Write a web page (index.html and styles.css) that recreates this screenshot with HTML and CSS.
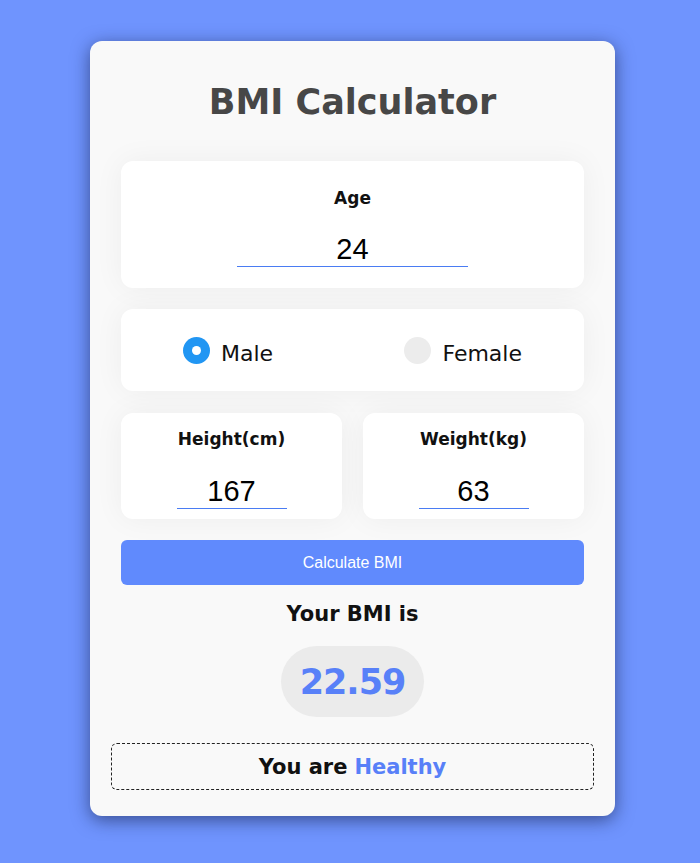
FILE: index.html
```html
<!DOCTYPE html>
<html>
<head>
<meta charset="utf-8">
<link rel="stylesheet" href="styles.css">
</head>
<body>
<div class="card">
  <h1 class="title">BMI Calculator</h1>
  <div class="box age-box">
    <label class="label">Age</label>
    <input class="num wide" type="text" value="24">
  </div>
  <div class="box gender-box">
    <div class="radio"><span class="dot on"></span><span class="rlabel">Male</span></div>
    <div class="radio"><span class="dot"></span><span class="rlabel">Female</span></div>
  </div>
  <div class="row">
    <div class="box small-box">
      <label class="label">Height(cm)</label>
      <input class="num narrow" type="text" value="167">
    </div>
    <div class="box small-box">
      <label class="label">Weight(kg)</label>
      <input class="num narrow" type="text" value="63">
    </div>
  </div>
  <button class="calc">Calculate BMI</button>
  <div class="your">Your BMI is</div>
  <div class="pill">22.59</div>
  <div class="result">You are <span class="hl">Healthy</span></div>
</div>
</body>
</html>
```
FILE: styles.css
```css
* { box-sizing: border-box; }
html, body { margin: 0; padding: 0; }
body {
  background: #6f94fe;
  width: 700px;
  height: 863px;
  padding-top: 41px;
  font-family: "DejaVu Sans", sans-serif;
}
.card {
  width: 525px;
  margin-left: 90px;
  height: 775px;
  background: #f9f9f9;
  border-radius: 12px;
  box-shadow: 0 4px 18px rgba(20, 30, 70, 0.6);
  padding: 0 31px;
  display: flex;
  flex-direction: column;
  align-items: stretch;
}
.title {
  margin: 0;
  height: 120px;
  display: flex;
  align-items: center;
  justify-content: center;
  padding-top: 2px;
  font-size: 35px;
  font-weight: 700;
  color: #474747;
}
.box {
  background: #fff;
  border-radius: 12px;
  box-shadow: 0 0 30px rgba(0, 0, 0, 0.05);
}
.age-box {
  height: 127px;
  display: flex;
  flex-direction: column;
  align-items: center;
  padding-top: 26px;
}
.label {
  font-size: 17px;
  font-weight: 700;
  color: #111;
  height: 22px;
  line-height: 22px;
}
.num {
  font-family: "Liberation Sans", Arial, sans-serif;
  font-size: 29px;
  color: #000;
  text-align: center;
  border: none;
  border-bottom: 1px solid #4a7cf3;
  background: transparent;
  outline: none;
  padding: 0;
  height: 36px;
  line-height: 36px;
}
.wide { width: 231px; margin-top: 22px; }
.narrow { width: 110px; margin-top: 23px; }
.gender-box {
  margin-top: 21px;
  height: 82px;
  display: flex;
  align-items: center;
  justify-content: space-between;
  padding: 6px 62px 0;
}
.radio { display: flex; align-items: center; gap: 11px; }
.dot {
  width: 27px;
  height: 27px;
  border-radius: 50%;
  background: #ececec;
  margin-top: -6px;
  position: relative;
}
.dot.on { background: #2196f3; }
.dot.on::after {
  content: "";
  position: absolute;
  left: 9px;
  top: 9px;
  width: 9px;
  height: 9px;
  border-radius: 50%;
  background: #fff;
}
.rlabel { font-size: 22px; color: #111; }
.row {
  margin-top: 22px;
  display: flex;
  gap: 21px;
}
.small-box {
  flex: 1;
  height: 106px;
  display: flex;
  flex-direction: column;
  align-items: center;
  padding-top: 15px;
}
.calc {
  margin-top: 21px;
  height: 45px;
  border: none;
  border-radius: 6px;
  background: #608afd;
  color: #fff;
  font-family: "Liberation Sans", Arial, sans-serif;
  font-size: 16px;
  padding: 0;
}
.your {
  margin-top: 14px;
  text-align: center;
  font-size: 21px;
  font-weight: 600;
  color: #111;
  height: 30px;
  line-height: 30px;
}
.pill {
  align-self: center;
  margin-top: 17px;
  width: 143px;
  height: 71px;
  border-radius: 36px;
  background: #ebebeb;
  color: #5880f8;
  font-size: 35px;
  letter-spacing: -1px;
  font-weight: 700;
  display: flex;
  align-items: center;
  justify-content: center;
}
.result {
  margin: 26px -10px 0;
  height: 47px;
  border: 1px dashed #222;
  border-radius: 6px;
  display: flex;
  align-items: center;
  justify-content: center;
  font-size: 21px;
  font-weight: 600;
  color: #111;
}
.hl { color: #5880f8; margin-left: 7px; }
```
